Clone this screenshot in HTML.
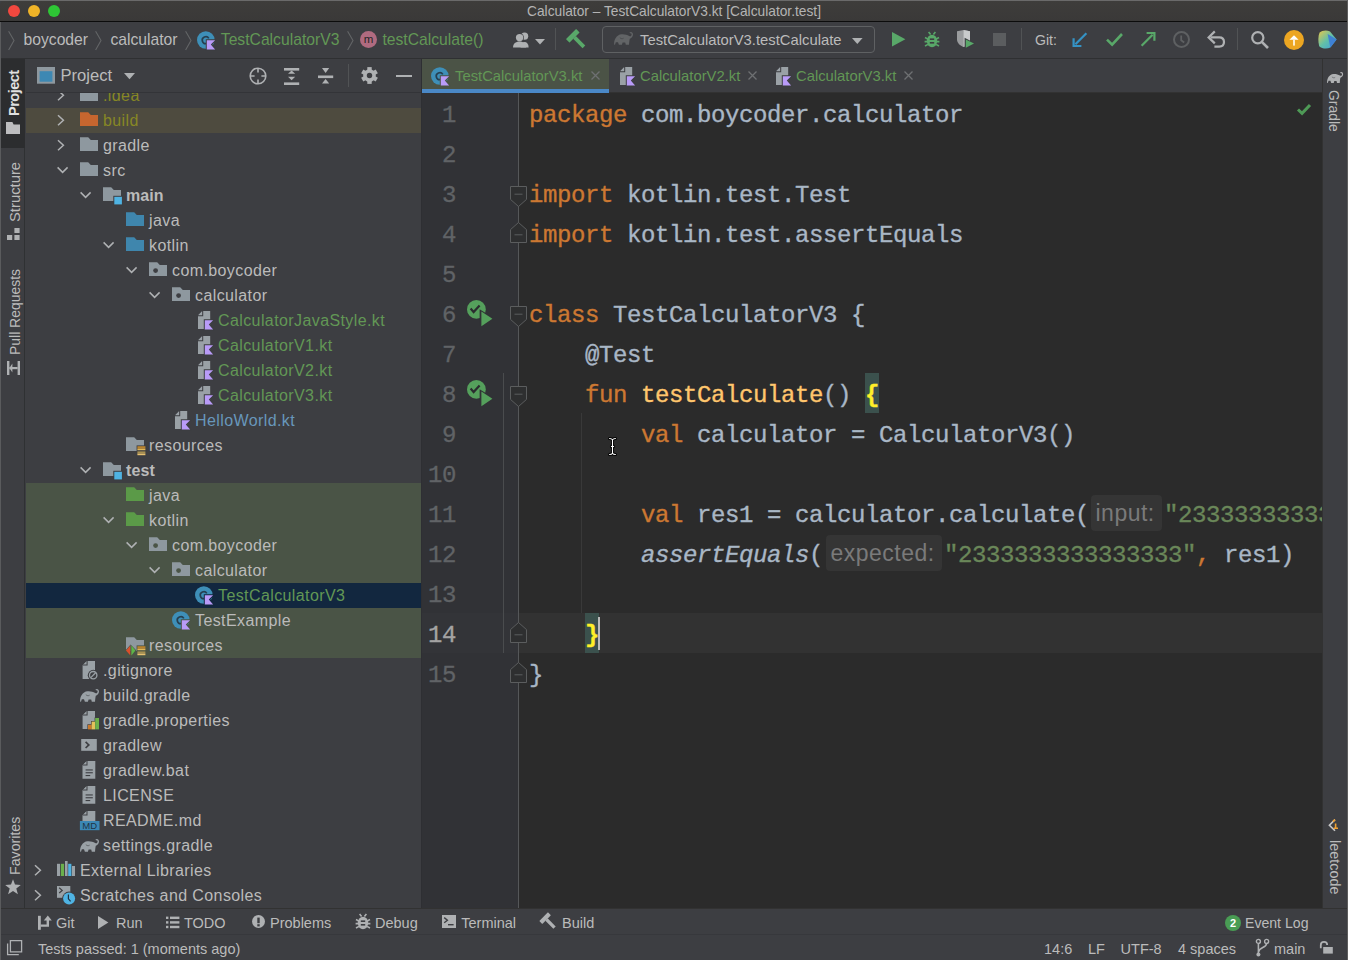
<!DOCTYPE html>
<html><head><meta charset="utf-8"><style>
*{margin:0;padding:0;box-sizing:border-box}
html,body{width:1348px;height:960px;overflow:hidden;background:#3d3e42;font-family:"Liberation Sans",sans-serif;color:#bbbbbb}
.a{position:absolute}
svg.a{overflow:visible}
#title{left:0;top:0;width:1348px;height:21px;background:linear-gradient(#3e3d3b,#3a3938);border-radius:5px 5px 0 0}
#titleline{left:0;top:20.6px;width:1348px;height:1.4px;background:#0c0c0c}
#nav{left:0;top:22px;width:1348px;height:37px;background:#3d3e42;border-bottom:1px solid #333438}
#lstripe{left:0;top:58px;width:25px;height:850px;background:#3d3e42;border-right:1px solid #2f3133}
#proj{left:26px;top:58px;width:395px;height:850px;background:#3d3e42;overflow:hidden}
#projhdr{left:0;top:0;width:395px;height:35px;background:#3d3e42;border-bottom:1px solid #333438}
.row{position:absolute;left:0;width:395px;height:25px}
.rowt{position:absolute;height:25px;line-height:25px;font-size:16px;letter-spacing:.4px;white-space:nowrap;color:#bbbbbb}
#split{left:421px;top:58px;width:1px;height:850px;background:#2e2f33}
#tabs{left:422px;top:58px;width:900px;height:35px;background:#3d3e42;border-bottom:1px solid #323232}
#editor{left:422px;top:93px;width:900px;height:815px;background:#2b2b2b;overflow:hidden}
#gutter{left:0;top:0;width:97px;height:815px;background:#313236}
.ln{position:absolute;left:0;width:34px;text-align:right;height:40px;line-height:40px;font-family:"Liberation Mono",monospace;font-size:24px;letter-spacing:-.4px;color:#606366;-webkit-text-stroke:.3px currentColor}
.code{position:absolute;left:107px;height:40px;line-height:40px;font-family:"Liberation Mono",monospace;font-size:24px;letter-spacing:-.4px;color:#a9b7c6;white-space:pre;-webkit-text-stroke:.35px currentColor}
.k{color:#cc7832}.f{color:#ffc66d}.s{color:#6a8759}
#rstripe{left:1322px;top:58px;width:26px;height:850px;background:#3d3e42;border-left:1px solid #323232;border-right:1px solid #5a5a5a}
#bstripe{left:0;top:908px;width:1348px;height:26px;background:#3d3e42;border-top:1px solid #323232}
#status{left:0;top:934px;width:1348px;height:26px;background:#3d3e42;border-top:1px solid #37383c}
.vt{position:absolute;transform-origin:0 0;transform:rotate(-90deg);white-space:nowrap;font-size:14px;color:#bbbbbb}
.br{font-weight:bold;color:#ffef28}
.it{font-style:italic}
.hint{position:absolute;height:36px;line-height:37.5px;font-size:23px;letter-spacing:.5px;color:#7a7a7a;white-space:nowrap}

</style></head><body>
<div id="title" class="a"></div><div id="titleline" class="a"></div>
<div class="a" style="left:0;top:0;width:1348px;height:1px;background:#6a6a6a"></div>
<div class="a" style="left:1347px;top:0;width:1px;height:960px;background:#5e5e5e;z-index:5"></div>
<div class="a" style="left:8px;top:5px;width:12px;height:12px;border-radius:6px;background:#f2483f"></div>
<div class="a" style="left:28px;top:5px;width:12px;height:12px;border-radius:6px;background:#f0b428"></div>
<div class="a" style="left:48px;top:5px;width:12px;height:12px;border-radius:6px;background:#2ec635"></div>
<div class="a" style="left:527px;top:2.8px;font-size:13.75px;line-height:17px;color:#b4b4b4;white-space:nowrap">Calculator – TestCalculatorV3.kt [Calculator.test]</div>
<div id="nav" class="a"></div>
<svg class="a" style="left:8px;top:30.5px" width="7" height="20" viewBox="0 0 7 20" ><path d="M0.6 0.2L6 9.6 0.6 19" fill="none" stroke="#636567" stroke-width="1.1"/></svg>
<div style="position:absolute;top:30px;height:20px;line-height:20px;font-size:15.7px;white-space:nowrap;left:23.5px;color:#bbbbbb">boycoder</div>
<svg class="a" style="left:95px;top:30.5px" width="7" height="20" viewBox="0 0 7 20" ><path d="M0.6 0.2L6 9.6 0.6 19" fill="none" stroke="#636567" stroke-width="1.1"/></svg>
<div style="position:absolute;top:30px;height:20px;line-height:20px;font-size:15.7px;white-space:nowrap;left:110.4px;color:#bbbbbb">calculator</div>
<svg class="a" style="left:185px;top:30.5px" width="7" height="20" viewBox="0 0 7 20" ><path d="M0.6 0.2L6 9.6 0.6 19" fill="none" stroke="#636567" stroke-width="1.1"/></svg>
<svg class="a" style="left:196.7px;top:28.2px" width="22" height="25" viewBox="0 0 22 25" ><circle cx="8.8" cy="12" r="8.8" fill="#3e8fb8"/><path d="M11.8 10.4A3.5 3.5 0 1 0 9.4 15.6" fill="none" stroke="#263f50" stroke-width="1.7"/><path d="M8.8 11.3h11.2l-4.6 5.2 4.6 5.8H8.8z" fill="#3d3e42"/><path d="M9.8 12.2h8.3l-4.3 4.4 4.3 4.8h-8.3z" fill="#b99bf8"/></svg>
<div style="position:absolute;top:30px;height:20px;line-height:20px;font-size:15.7px;white-space:nowrap;left:220.8px;color:#629755">TestCalculatorV3</div>
<svg class="a" style="left:347px;top:30.5px" width="7" height="20" viewBox="0 0 7 20" ><path d="M0.6 0.2L6 9.6 0.6 19" fill="none" stroke="#636567" stroke-width="1.1"/></svg>
<svg class="a" style="left:359.5px;top:31.299999999999997px" width="17" height="17" viewBox="0 0 17 17" ><circle cx="8.5" cy="8.5" r="8.5" fill="#b06b80"/><text x="8.6" y="12.3" text-anchor="middle" font-family="Liberation Sans" font-size="11.5" fill="#262626">m</text></svg>
<div style="position:absolute;top:30px;height:20px;line-height:20px;font-size:15.7px;white-space:nowrap;left:382.4px;color:#629755">testCalculate()</div>
<svg class="a" style="left:512.5px;top:31.6px" width="19" height="16" viewBox="0 0 19 16" ><circle cx="11.6" cy="4.2" r="3.6" fill="#afb1b3"/><path d="M7.6 15.4c0-3.4 1.8-5.4 4-5.4s4 2 4 5.4z" fill="#afb1b3"/><circle cx="6.6" cy="5.6" r="4.4" fill="#3d3e42"/><circle cx="6.6" cy="5.6" r="3.7" fill="#afb1b3"/><path d="M0 15.4c0-3.8 2.6-6 6.6-6s6.6 2.2 6.6 6z" fill="#afb1b3"/></svg>
<svg class="a" style="left:535px;top:38.6px" width="10" height="5.6" viewBox="0 0 10 5.6" ><path d="M0 0H10L5.0 5.6z" fill="#afb1b3"/></svg>
<div class="a" style="left:555px;top:28px;width:1px;height:22px;background:#515355"></div>
<svg class="a" style="left:568px;top:30.5px" width="19" height="18" viewBox="0 0 19 18" ><g transform="scale(1.0) rotate(-45 9 9)"><rect x="1.8" y="0.6" width="14.4" height="5" rx=".5" fill="#59a869"/><rect x="7.1" y="5.4" width="3.8" height="13.4" fill="#59a869"/></g></svg>
<div class="a" style="left:602px;top:26px;width:273px;height:27px;border:1px solid #5f6163;border-radius:4px"></div>
<svg class="a" style="left:614px;top:26px" width="22" height="25" viewBox="0 0 22 25" ><g transform="scale(1.0)"><path d="M0.2 18.8C-0.4 14 2.4 8.6 7.6 8.2c3-.2 5.6.6 7.6 1.8 1.4.8 2.2 0 2.4-1.2.2-1-.6-1.8-1.4-1.4l-.8-.9c1.6-1.2 3.6-.3 3.6 1.9 0 2.4-1.8 3.6-3.2 4.3-.4 1.4-.6 3.6-.8 6.1h-3.2l-.6-2.4h-2.6l-.7 2.4h-3l-.9-2.6h-2.2l-.8 2.6z" fill="#626466"/><path d="M5.8 11.6c1.2 1.2 2.6 1.4 3.8 .6" fill="none" stroke="#3d3e42" stroke-width=".6"/></g></svg>
<div class="a" style="left:640px;top:30px;height:20px;line-height:20px;font-size:14.8px;color:#bbbbbb;white-space:nowrap">TestCalculatorV3.testCalculate</div>
<svg class="a" style="left:851.5px;top:38.2px" width="10.6" height="6" viewBox="0 0 10.6 6" ><path d="M0 0H10.6L5.3 6z" fill="#afb1b3"/></svg>
<svg class="a" style="left:892px;top:32px" width="13.4" height="14.4" viewBox="0 0 13.4 14.4" ><path d="M0 0L13.4 7.2 0 14.4z" fill="#59a869"/></svg>
<svg class="a" style="left:924px;top:31px" width="16" height="17" viewBox="0 0 16 17" ><ellipse cx="8" cy="10" rx="5.2" ry="6.2" fill="#59a869"/><path d="M1 6.5l3 1.6M15 6.5l-3 1.6M0.6 10.6h3M15.4 10.6h-3M1 15l3-1.6M15 15l-3-1.6M4.6 1l2 2.4M11.4 1l-2 2.4" stroke="#59a869" stroke-width="1.6"/><rect x="5.8" y="7.4" width="4.4" height="1.6" fill="#3d3e42"/><rect x="5.8" y="11" width="4.4" height="1.6" fill="#3d3e42"/></svg>
<svg class="a" style="left:956px;top:30px" width="20" height="20" viewBox="0 0 20 20" ><path d="M1 1.2L7.6 0 14 1.2V9.4C14 13 11 15.6 7.6 17 4.2 15.6 1 13 1 9.4z" fill="#9a9c9e"/><path d="M7.6 0V17C11 15.6 14 13 14 9.4V1.2z" fill="#c9cbcc"/><path d="M8.6 7.8L19.6 13.6 8.6 19.4z" fill="#3d3e42"/><path d="M9.8 9.4L18 13.6 9.8 17.8z" fill="#59a869"/></svg>
<div class="a" style="left:993px;top:33px;width:13px;height:13px;background:#5b5d5f"></div>
<div class="a" style="left:1021px;top:28px;width:1px;height:22px;background:#515355"></div>
<div class="a" style="left:1035px;top:30px;height:20px;line-height:20px;font-size:14.1px;color:#bbbbbb">Git:</div>
<svg class="a" style="left:1073px;top:32.2px" width="15" height="15" viewBox="0 0 15 15" ><path d="M13.4 1.2L2.4 12.2" stroke="#3592c4" stroke-width="2.2"/><path d="M0.6 6.2V14H8.4" fill="none" stroke="#3592c4" stroke-width="2.2"/></svg>
<svg class="a" style="left:1106px;top:33.4px" width="17" height="13.2" viewBox="0 0 17 13.2" ><path d="M1 6.6L6.12 11.6L16 1" fill="none" stroke="#59a869" stroke-width="2.6"/></svg>
<svg class="a" style="left:1140px;top:32.2px" width="15" height="15" viewBox="0 0 15 15" ><path d="M1.6 13.8L12.6 2.8" stroke="#59a869" stroke-width="2.2"/><path d="M6.6 1H14.4V8.8" fill="none" stroke="#59a869" stroke-width="2.2"/></svg>
<svg class="a" style="left:1173px;top:31.2px" width="17" height="17" viewBox="0 0 17 17" ><circle cx="8.5" cy="8.5" r="7.5" fill="none" stroke="#5e6062" stroke-width="2"/><path d="M8.2 4.4V9.2L11.2 11.4" fill="none" stroke="#5e6062" stroke-width="1.8"/></svg>
<svg class="a" style="left:1208px;top:31.4px" width="17" height="17" viewBox="0 0 17 17" ><path d="M2.6 6.4H11.2C14.4 6.4 16 8.4 16 11S14.4 15.6 11.2 15.6H6.4" fill="none" stroke="#afb1b3" stroke-width="2.2"/><path d="M6.8 0.4L0.6 6.4 6.8 12.4" fill="none" stroke="#afb1b3" stroke-width="2.2"/></svg>
<div class="a" style="left:1237px;top:28px;width:1px;height:22px;background:#515355"></div>
<svg class="a" style="left:1251px;top:31.4px" width="18" height="18" viewBox="0 0 18 18" ><circle cx="6.8" cy="6.8" r="5.6" fill="none" stroke="#afb1b3" stroke-width="2.2"/><path d="M10.8 10.8L17 17" stroke="#afb1b3" stroke-width="2.6"/></svg>
<svg class="a" style="left:1284px;top:30px" width="20" height="20" viewBox="0 0 20 20" ><circle cx="10" cy="10" r="10" fill="#eca622"/><path d="M10 5.2L14.6 9.8H5.4z" fill="#ffffff"/><rect x="9.1" y="9.6" width="1.8" height="6" fill="#fff6e0"/></svg>
<svg class="a" style="left:1318px;top:30.4px" width="20" height="20" viewBox="0 0 20 20" ><defs><linearGradient id="pg" x1="0" y1="0" x2="1" y2="1"><stop offset="0" stop-color="#e8c84a"/><stop offset=".5" stop-color="#62c0a8"/><stop offset="1" stop-color="#3f9fe0"/></linearGradient></defs><path d="M1.6 2.6C4 .4 8.6 0 12 1.4L18.6 9.4 12.4 17.6C8.6 19.4 3.6 18.6 1.2 16.2 0 11.6 0 6.4 1.6 2.6z" fill="url(#pg)"/><path d="M9.6 4L18.6 9.4 12.4 17.6C11.6 14 10.4 8 9.6 4z" fill="#3b78d8" opacity=".85"/></svg>
<div id="lstripe" class="a"></div>
<div class="a" style="left:0;top:58px;width:25px;height:89.7px;background:#2c2d2f"></div>
<div class="a" style="left:0;top:22px;width:1px;height:938px;background:#5a5b5d;z-index:5"></div>
<div class="vt" style="left:6.6px;top:115.5px;font-size:14.5px;line-height:14px;font-weight:bold;letter-spacing:-.5px;color:#e0e0e0">Project</div>
<svg class="a" style="left:6px;top:122px" width="14" height="12" viewBox="0 0 14 12" ><path d="M0 0H6.4L7.6 2.5H14V12H0z" fill="#bdbdbf"/></svg>
<div class="vt" style="left:7.6px;top:221.5px;font-size:14.8px;line-height:14px;color:#bbbbbb">Structure</div>
<svg class="a" style="left:7px;top:228px" width="13" height="12" viewBox="0 0 13 12" ><rect x="0" y="7" width="5.2" height="5" fill="#afb1b3"/><rect x="7.4" y="7" width="5.2" height="5" fill="#afb1b3"/><rect x="7.4" y="0" width="5.2" height="5" fill="#afb1b3"/></svg>
<div class="vt" style="left:7.6px;top:355px;font-size:13.95px;line-height:14px;color:#bbbbbb">Pull Requests</div>
<svg class="a" style="left:7px;top:361px" width="13" height="14" viewBox="0 0 13 14" ><rect x="0" y="0" width="2.4" height="14" fill="#afb1b3"/><rect x="10.6" y="0" width="2.4" height="14" fill="#afb1b3"/><rect x="2.4" y="6" width="8.2" height="2.2" fill="#afb1b3"/><path d="M5.4 2.6L2.4 7.1 5.4 11.6z" fill="#afb1b3"/></svg>
<div class="vt" style="left:7.6px;top:875px;font-size:14.2px;line-height:14px;color:#bbbbbb">Favorites</div>
<svg class="a" style="left:5px;top:879px" width="16" height="16" viewBox="0 0 16 16" ><path d="M8 0.2L10 5.6 15.8 5.9 11.3 9.5 12.9 15.3 8 12 3.1 15.3 4.7 9.5 0.2 5.9 6 5.6z" fill="#afb1b3"/></svg>
<div id="proj" class="a">
<div class="row" style="top:25px;"></div>
<div class="row" style="top:50px;background:#4e4b3f;"></div>
<div class="row" style="top:75px;"></div>
<div class="row" style="top:100px;"></div>
<div class="row" style="top:125px;"></div>
<div class="row" style="top:150px;"></div>
<div class="row" style="top:175px;"></div>
<div class="row" style="top:200px;"></div>
<div class="row" style="top:225px;"></div>
<div class="row" style="top:250px;"></div>
<div class="row" style="top:275px;"></div>
<div class="row" style="top:300px;"></div>
<div class="row" style="top:325px;"></div>
<div class="row" style="top:350px;"></div>
<div class="row" style="top:375px;"></div>
<div class="row" style="top:400px;"></div>
<div class="row" style="top:425px;background:#4a5446;"></div>
<div class="row" style="top:450px;background:#4a5446;"></div>
<div class="row" style="top:475px;background:#4a5446;"></div>
<div class="row" style="top:500px;background:#4a5446;"></div>
<div class="row" style="top:525px;background:#12273f;"></div>
<div class="row" style="top:550px;background:#4a5446;"></div>
<div class="row" style="top:575px;background:#4a5446;"></div>
<div class="row" style="top:600px;"></div>
<div class="row" style="top:625px;"></div>
<div class="row" style="top:650px;"></div>
<div class="row" style="top:675px;"></div>
<div class="row" style="top:700px;"></div>
<div class="row" style="top:725px;"></div>
<div class="row" style="top:750px;"></div>
<div class="row" style="top:775px;"></div>
<div class="row" style="top:800px;"></div>
<div class="row" style="top:825px;"></div>
<svg class="a" style="left:31px;top:25px" width="10" height="25" viewBox="0 0 10 25" ><path d="M1 7.2l5.4 5-5.4 5" fill="none" stroke="#afb1b3" stroke-width="1.5"/></svg>
<svg class="a" style="left:54px;top:25px" width="20" height="25" viewBox="0 0 20 25" ><path d="M0 4.3h8.2l2.6 2.7H18V18H0z" fill="#8e989f"/></svg>
<div class="rowt" style="top:25px;left:77px;color:#878725;">.idea</div>
<svg class="a" style="left:31px;top:50px" width="10" height="25" viewBox="0 0 10 25" ><path d="M1 7.2l5.4 5-5.4 5" fill="none" stroke="#afb1b3" stroke-width="1.5"/></svg>
<svg class="a" style="left:54px;top:50px" width="20" height="25" viewBox="0 0 20 25" ><path d="M0 4.3h8.2l2.6 2.7H18V18H0z" fill="#c6662f"/></svg>
<div class="rowt" style="top:50px;left:77px;color:#878725;">build</div>
<svg class="a" style="left:31px;top:75px" width="10" height="25" viewBox="0 0 10 25" ><path d="M1 7.2l5.4 5-5.4 5" fill="none" stroke="#afb1b3" stroke-width="1.5"/></svg>
<svg class="a" style="left:54px;top:75px" width="20" height="25" viewBox="0 0 20 25" ><path d="M0 4.3h8.2l2.6 2.7H18V18H0z" fill="#8e989f"/></svg>
<div class="rowt" style="top:75px;left:77px;">gradle</div>
<svg class="a" style="left:30.6px;top:100px" width="14" height="25" viewBox="0 0 14 25" ><path d="M0.6 9.4l5 5 5-5" fill="none" stroke="#afb1b3" stroke-width="1.5"/></svg>
<svg class="a" style="left:54px;top:100px" width="20" height="25" viewBox="0 0 20 25" ><path d="M0 4.3h8.2l2.6 2.7H18V18H0z" fill="#8e989f"/></svg>
<div class="rowt" style="top:100px;left:77px;">src</div>
<svg class="a" style="left:53.6px;top:125px" width="14" height="25" viewBox="0 0 14 25" ><path d="M0.6 9.4l5 5 5-5" fill="none" stroke="#afb1b3" stroke-width="1.5"/></svg>
<svg class="a" style="left:77px;top:125px" width="22" height="25" viewBox="0 0 22 25" ><path d="M0 4.3h8.2l2.6 2.7H18V18H0z" fill="#8e989f"/><rect x="10.3" y="12.8" width="9.6" height="9.6" fill="#3d3e42"/><rect x="11.3" y="13.8" width="7.6" height="7.6" fill="#4fb3e3"/></svg>
<div class="rowt" style="top:125px;left:100px;font-weight:bold;letter-spacing:.1px;">main</div>
<svg class="a" style="left:100px;top:150px" width="20" height="25" viewBox="0 0 20 25" ><path d="M0 4.3h8.2l2.6 2.7H18V18H0z" fill="#3f86ad"/></svg>
<div class="rowt" style="top:150px;left:123px;">java</div>
<svg class="a" style="left:76.6px;top:175px" width="14" height="25" viewBox="0 0 14 25" ><path d="M0.6 9.4l5 5 5-5" fill="none" stroke="#afb1b3" stroke-width="1.5"/></svg>
<svg class="a" style="left:100px;top:175px" width="20" height="25" viewBox="0 0 20 25" ><path d="M0 4.3h8.2l2.6 2.7H18V18H0z" fill="#3f86ad"/></svg>
<div class="rowt" style="top:175px;left:123px;">kotlin</div>
<svg class="a" style="left:99.6px;top:200px" width="14" height="25" viewBox="0 0 14 25" ><path d="M0.6 9.4l5 5 5-5" fill="none" stroke="#afb1b3" stroke-width="1.5"/></svg>
<svg class="a" style="left:123px;top:200px" width="20" height="25" viewBox="0 0 20 25" ><path d="M0 4.3h8.2l2.6 2.7H18V18H0z" fill="#8e989f"/><circle cx="6.6" cy="12.6" r="2.4" fill="#3d3e42"/></svg>
<div class="rowt" style="top:200px;left:146px;">com.boycoder</div>
<svg class="a" style="left:122.6px;top:225px" width="14" height="25" viewBox="0 0 14 25" ><path d="M0.6 9.4l5 5 5-5" fill="none" stroke="#afb1b3" stroke-width="1.5"/></svg>
<svg class="a" style="left:146px;top:225px" width="20" height="25" viewBox="0 0 20 25" ><path d="M0 4.3h8.2l2.6 2.7H18V18H0z" fill="#8e989f"/><circle cx="6.6" cy="12.6" r="2.4" fill="#3d3e42"/></svg>
<div class="rowt" style="top:225px;left:169px;">calculator</div>
<svg class="a" style="left:169px;top:250px" width="22" height="25" viewBox="0 0 22 25" ><path d="M8 3h7.2v18H3V8z" fill="#9aa1a6"/><path d="M3 7.2L7.2 3V7.2z" fill="#9aa1a6"/><path d="M7.2 2.5h1v5.7h-5.2v-1h4.2z" fill="#3d3e42"/><path d="M8.8 11.3h11.2l-4.6 5.2 4.6 5.8H8.8z" fill="#3d3e42"/><path d="M9.8 12.2h8.3l-4.3 4.4 4.3 4.8h-8.3z" fill="#b99bf8"/></svg>
<div class="rowt" style="top:250px;left:192px;color:#629755;">CalculatorJavaStyle.kt</div>
<svg class="a" style="left:169px;top:275px" width="22" height="25" viewBox="0 0 22 25" ><path d="M8 3h7.2v18H3V8z" fill="#9aa1a6"/><path d="M3 7.2L7.2 3V7.2z" fill="#9aa1a6"/><path d="M7.2 2.5h1v5.7h-5.2v-1h4.2z" fill="#3d3e42"/><path d="M8.8 11.3h11.2l-4.6 5.2 4.6 5.8H8.8z" fill="#3d3e42"/><path d="M9.8 12.2h8.3l-4.3 4.4 4.3 4.8h-8.3z" fill="#b99bf8"/></svg>
<div class="rowt" style="top:275px;left:192px;color:#629755;">CalculatorV1.kt</div>
<svg class="a" style="left:169px;top:300px" width="22" height="25" viewBox="0 0 22 25" ><path d="M8 3h7.2v18H3V8z" fill="#9aa1a6"/><path d="M3 7.2L7.2 3V7.2z" fill="#9aa1a6"/><path d="M7.2 2.5h1v5.7h-5.2v-1h4.2z" fill="#3d3e42"/><path d="M8.8 11.3h11.2l-4.6 5.2 4.6 5.8H8.8z" fill="#3d3e42"/><path d="M9.8 12.2h8.3l-4.3 4.4 4.3 4.8h-8.3z" fill="#b99bf8"/></svg>
<div class="rowt" style="top:300px;left:192px;color:#629755;">CalculatorV2.kt</div>
<svg class="a" style="left:169px;top:325px" width="22" height="25" viewBox="0 0 22 25" ><path d="M8 3h7.2v18H3V8z" fill="#9aa1a6"/><path d="M3 7.2L7.2 3V7.2z" fill="#9aa1a6"/><path d="M7.2 2.5h1v5.7h-5.2v-1h4.2z" fill="#3d3e42"/><path d="M8.8 11.3h11.2l-4.6 5.2 4.6 5.8H8.8z" fill="#3d3e42"/><path d="M9.8 12.2h8.3l-4.3 4.4 4.3 4.8h-8.3z" fill="#b99bf8"/></svg>
<div class="rowt" style="top:325px;left:192px;color:#629755;">CalculatorV3.kt</div>
<svg class="a" style="left:146px;top:350px" width="22" height="25" viewBox="0 0 22 25" ><path d="M8 3h7.2v18H3V8z" fill="#9aa1a6"/><path d="M3 7.2L7.2 3V7.2z" fill="#9aa1a6"/><path d="M7.2 2.5h1v5.7h-5.2v-1h4.2z" fill="#3d3e42"/><path d="M8.8 11.3h11.2l-4.6 5.2 4.6 5.8H8.8z" fill="#3d3e42"/><path d="M9.8 12.2h8.3l-4.3 4.4 4.3 4.8h-8.3z" fill="#b99bf8"/></svg>
<div class="rowt" style="top:350px;left:169px;color:#6897bb;">HelloWorld.kt</div>
<svg class="a" style="left:100px;top:375px" width="22" height="25" viewBox="0 0 22 25" ><path d="M0 4.2h8.2l2.6 2.8H18V18H0z" fill="#8e989f"/><rect x="10.6" y="12.4" width="9.6" height="11" fill="#3d3e42"/><rect x="11.4" y="13.2" width="8" height="2.6" fill="#b8832e"/><rect x="11.4" y="15.8" width="8" height="1.4" fill="#e0b85a"/><rect x="11.4" y="18.4" width="8" height="2.2" fill="#a89050"/><rect x="11.4" y="20.6" width="8" height="1.6" fill="#e6c070"/></svg>
<div class="rowt" style="top:375px;left:123px;">resources</div>
<svg class="a" style="left:53.6px;top:400px" width="14" height="25" viewBox="0 0 14 25" ><path d="M0.6 9.4l5 5 5-5" fill="none" stroke="#afb1b3" stroke-width="1.5"/></svg>
<svg class="a" style="left:77px;top:400px" width="22" height="25" viewBox="0 0 22 25" ><path d="M0 4.3h8.2l2.6 2.7H18V18H0z" fill="#8e989f"/><rect x="10.3" y="12.8" width="9.6" height="9.6" fill="#3d3e42"/><rect x="11.3" y="13.8" width="7.6" height="7.6" fill="#4fb3e3"/></svg>
<div class="rowt" style="top:400px;left:100px;font-weight:bold;letter-spacing:.1px;">test</div>
<svg class="a" style="left:100px;top:425px" width="20" height="25" viewBox="0 0 20 25" ><path d="M0 4.3h8.2l2.6 2.7H18V18H0z" fill="#5b9a48"/></svg>
<div class="rowt" style="top:425px;left:123px;">java</div>
<svg class="a" style="left:76.6px;top:450px" width="14" height="25" viewBox="0 0 14 25" ><path d="M0.6 9.4l5 5 5-5" fill="none" stroke="#afb1b3" stroke-width="1.5"/></svg>
<svg class="a" style="left:100px;top:450px" width="20" height="25" viewBox="0 0 20 25" ><path d="M0 4.3h8.2l2.6 2.7H18V18H0z" fill="#5b9a48"/></svg>
<div class="rowt" style="top:450px;left:123px;">kotlin</div>
<svg class="a" style="left:99.6px;top:475px" width="14" height="25" viewBox="0 0 14 25" ><path d="M0.6 9.4l5 5 5-5" fill="none" stroke="#afb1b3" stroke-width="1.5"/></svg>
<svg class="a" style="left:123px;top:475px" width="20" height="25" viewBox="0 0 20 25" ><path d="M0 4.3h8.2l2.6 2.7H18V18H0z" fill="#8e989f"/><circle cx="6.6" cy="12.6" r="2.4" fill="#4a5446"/></svg>
<div class="rowt" style="top:475px;left:146px;">com.boycoder</div>
<svg class="a" style="left:122.6px;top:500px" width="14" height="25" viewBox="0 0 14 25" ><path d="M0.6 9.4l5 5 5-5" fill="none" stroke="#afb1b3" stroke-width="1.5"/></svg>
<svg class="a" style="left:146px;top:500px" width="20" height="25" viewBox="0 0 20 25" ><path d="M0 4.3h8.2l2.6 2.7H18V18H0z" fill="#8e989f"/><circle cx="6.6" cy="12.6" r="2.4" fill="#4a5446"/></svg>
<div class="rowt" style="top:500px;left:169px;">calculator</div>
<svg class="a" style="left:169px;top:525px" width="22" height="25" viewBox="0 0 22 25" ><circle cx="8.8" cy="12" r="8.8" fill="#3e8fb8"/><path d="M11.8 10.4A3.5 3.5 0 1 0 9.4 15.6" fill="none" stroke="#263f50" stroke-width="1.7"/><path d="M8.8 11.3h11.2l-4.6 5.2 4.6 5.8H8.8z" fill="#12273f"/><path d="M9.8 12.2h8.3l-4.3 4.4 4.3 4.8h-8.3z" fill="#b99bf8"/></svg>
<div class="rowt" style="top:525px;left:192px;color:#629755;">TestCalculatorV3</div>
<svg class="a" style="left:146px;top:550px" width="22" height="25" viewBox="0 0 22 25" ><circle cx="8.8" cy="12" r="8.8" fill="#3e8fb8"/><path d="M11.8 10.4A3.5 3.5 0 1 0 9.4 15.6" fill="none" stroke="#263f50" stroke-width="1.7"/><path d="M8.8 11.3h11.2l-4.6 5.2 4.6 5.8H8.8z" fill="#4a5446"/><path d="M9.8 12.2h8.3l-4.3 4.4 4.3 4.8h-8.3z" fill="#b99bf8"/></svg>
<div class="rowt" style="top:550px;left:169px;">TestExample</div>
<svg class="a" style="left:100px;top:575px" width="22" height="25" viewBox="0 0 22 25" ><path d="M0 4.2h8.2l2.6 2.8H18V18H0z" fill="#8e989f"/><path d="M-0.6 17.6L4.6 11.6V23.2z" fill="#4a5446"/><path d="M0 17.5L4.4 12.4V22.5z" fill="#d94f2b"/><path d="M4.6 11.6L10.4 17.6 4.6 23.4z" fill="#4a5446"/><path d="M5.4 12.6L9.4 17.5 5.4 22.4z" fill="#5eb548"/><rect x="10.6" y="12.4" width="9.6" height="11" fill="#4a5446"/><rect x="11.4" y="13.2" width="8" height="2.6" fill="#b8832e"/><rect x="11.4" y="15.8" width="8" height="1.4" fill="#e0b85a"/><rect x="11.4" y="18.4" width="8" height="2.2" fill="#a89050"/><rect x="11.4" y="20.6" width="8" height="1.6" fill="#e6c070"/></svg>
<div class="rowt" style="top:575px;left:123px;">resources</div>
<svg class="a" style="left:54px;top:600px" width="22" height="25" viewBox="0 0 22 25" ><path d="M7.1 3H15V21H2.6V7.5z" fill="#9aa1a6"/><path d="M2.6 7.2L6.8 3V7.2z" fill="#9aa1a6"/><path d="M6.6 2.5h1v5.0h-5.0v-1h4.0z" fill="#3d3e42"/><circle cx="13.2" cy="17.2" r="5.4" fill="#3d3e42"/><circle cx="13.2" cy="17.2" r="3.7" fill="none" stroke="#9aa1a6" stroke-width="1.3"/><path d="M10.8 19.6l4.8-4.8" stroke="#9aa1a6" stroke-width="1.3"/></svg>
<div class="rowt" style="top:600px;left:77px;">.gitignore</div>
<svg class="a" style="left:54px;top:625px" width="22" height="25" viewBox="0 0 22 25" ><g transform="scale(1.0)"><path d="M0.2 18.8C-0.4 14 2.4 8.6 7.6 8.2c3-.2 5.6.6 7.6 1.8 1.4.8 2.2 0 2.4-1.2.2-1-.6-1.8-1.4-1.4l-.8-.9c1.6-1.2 3.6-.3 3.6 1.9 0 2.4-1.8 3.6-3.2 4.3-.4 1.4-.6 3.6-.8 6.1h-3.2l-.6-2.4h-2.6l-.7 2.4h-3l-.9-2.6h-2.2l-.8 2.6z" fill="#9aa1a6"/><path d="M5.8 11.6c1.2 1.2 2.6 1.4 3.8 .6" fill="none" stroke="#3d3e42" stroke-width=".6"/></g></svg>
<div class="rowt" style="top:625px;left:77px;">build.gradle</div>
<svg class="a" style="left:54px;top:650px" width="22" height="25" viewBox="0 0 22 25" ><path d="M7.1 3H15V21H2.6V7.5z" fill="#9aa1a6"/><path d="M2.6 7.2L6.8 3V7.2z" fill="#9aa1a6"/><path d="M6.6 2.5h1v5.0h-5.0v-1h4.0z" fill="#3d3e42"/><path d="M7.4 22V16.2H11V13H14.6V9.4H19.6V22z" fill="#3d3e42"/><rect x="8" y="16.8" width="3.6" height="4.6" fill="#c8782a"/><rect x="11.6" y="13.6" width="3.6" height="7.8" fill="#e2c25a"/><rect x="15.2" y="10" width="3.8" height="11.4" fill="#6cb04a"/></svg>
<div class="rowt" style="top:650px;left:77px;">gradle.properties</div>
<svg class="a" style="left:54px;top:675px" width="20" height="25" viewBox="0 0 20 25" ><rect x="1.2" y="6" width="15.6" height="11.8" fill="#9aa1a6"/><path d="M5.6 8.8l3.2 3.1-3.2 3.1" fill="none" stroke="#3d3e42" stroke-width="1.7"/></svg>
<div class="rowt" style="top:675px;left:77px;">gradlew</div>
<svg class="a" style="left:54px;top:700px" width="20" height="25" viewBox="0 0 20 25" ><path d="M7.0 3H15.3V20.8H2.5V7.5z" fill="#9aa1a6"/><path d="M2.5 7.2L6.7 3V7.2z" fill="#9aa1a6"/><path d="M6.5 2.5h1v5.0h-5.0v-1h4.0z" fill="#3d3e42"/><rect x="5.6" y="11.4" width="7.2" height="1.1" fill="#3d3e42"/><rect x="5.6" y="14.2" width="7.2" height="1.1" fill="#3d3e42"/><rect x="5.6" y="17" width="4.6" height="1.1" fill="#3d3e42"/></svg>
<div class="rowt" style="top:700px;left:77px;">gradlew.bat</div>
<svg class="a" style="left:54px;top:725px" width="20" height="25" viewBox="0 0 20 25" ><path d="M7.0 3H15.3V20.8H2.5V7.5z" fill="#9aa1a6"/><path d="M2.5 7.2L6.7 3V7.2z" fill="#9aa1a6"/><path d="M6.5 2.5h1v5.0h-5.0v-1h4.0z" fill="#3d3e42"/><rect x="5.6" y="11.4" width="7.2" height="1.1" fill="#3d3e42"/><rect x="5.6" y="14.2" width="7.2" height="1.1" fill="#3d3e42"/><rect x="5.6" y="17" width="4.6" height="1.1" fill="#3d3e42"/></svg>
<div class="rowt" style="top:725px;left:77px;">LICENSE</div>
<svg class="a" style="left:54px;top:750px" width="22" height="25" viewBox="0 0 22 25" ><path d="M7.0 3H15.3V14H2.5V7.5z" fill="#9aa1a6"/><path d="M2.5 7.2L6.7 3V7.2z" fill="#9aa1a6"/><path d="M6.5 2.5h1v5.0h-5.0v-1h4.0z" fill="#3d3e42"/><rect x="-0.1" y="13" width="19.6" height="9.2" fill="#3b87b5"/><text x="9.7" y="21" text-anchor="middle" font-family="Liberation Sans" font-size="9.5" fill="#1f3445">MD</text></svg>
<div class="rowt" style="top:750px;left:77px;">README.md</div>
<svg class="a" style="left:54px;top:775px" width="22" height="25" viewBox="0 0 22 25" ><g transform="scale(1.0)"><path d="M0.2 18.8C-0.4 14 2.4 8.6 7.6 8.2c3-.2 5.6.6 7.6 1.8 1.4.8 2.2 0 2.4-1.2.2-1-.6-1.8-1.4-1.4l-.8-.9c1.6-1.2 3.6-.3 3.6 1.9 0 2.4-1.8 3.6-3.2 4.3-.4 1.4-.6 3.6-.8 6.1h-3.2l-.6-2.4h-2.6l-.7 2.4h-3l-.9-2.6h-2.2l-.8 2.6z" fill="#9aa1a6"/><path d="M5.8 11.6c1.2 1.2 2.6 1.4 3.8 .6" fill="none" stroke="#3d3e42" stroke-width=".6"/></g></svg>
<div class="rowt" style="top:775px;left:77px;">settings.gradle</div>
<svg class="a" style="left:8px;top:800px" width="10" height="25" viewBox="0 0 10 25" ><path d="M1 7.2l5.4 5-5.4 5" fill="none" stroke="#afb1b3" stroke-width="1.5"/></svg>
<svg class="a" style="left:31px;top:800px" width="20" height="25" viewBox="0 0 20 25" ><rect x="0" y="5.8" width="3" height="12.2" fill="#9aa1a6"/><rect x="3.8" y="5.8" width="3.3" height="12.2" fill="#6ab04c"/><rect x="8" y="3" width="2.6" height="15" fill="#9aa1a6"/><rect x="11.2" y="5.8" width="3.2" height="12.2" fill="#4fb3e3"/><rect x="15" y="8" width="3" height="10" fill="#9aa1a6"/></svg>
<div class="rowt" style="top:800px;left:54px;">External Libraries</div>
<svg class="a" style="left:8px;top:825px" width="10" height="25" viewBox="0 0 10 25" ><path d="M1 7.2l5.4 5-5.4 5" fill="none" stroke="#afb1b3" stroke-width="1.5"/></svg>
<svg class="a" style="left:31px;top:825px" width="22" height="25" viewBox="0 0 22 25" ><rect x="0" y="3" width="13.3" height="11.8" fill="#9aa1a6"/><path d="M2.2 4.8l3 2.6-3 2.6" fill="none" stroke="#3d3e42" stroke-width="1.2"/><circle cx="12.1" cy="15.6" r="7" fill="#3d3e42"/><circle cx="12.1" cy="15.6" r="6" fill="#4fb3e3"/><path d="M11.4 11.4v4.4l2.2 2.6" fill="none" stroke="#1f3445" stroke-width="1.2"/></svg>
<div class="rowt" style="top:825px;left:54px;">Scratches and Consoles</div>
<div id="projhdr" class="a">
<svg class="a" style="left:10.899999999999999px;top:9.299999999999997px" width="18" height="17" viewBox="0 0 18 17" ><rect x="0" y="0" width="18" height="16.7" fill="#8e989f"/><rect x="2.6" y="4.2" width="12.8" height="10.5" fill="#3d88b3"/></svg>
<div class="a" style="left:34.5px;top:0.8px;height:34px;line-height:34px;font-size:16.6px;color:#bbbbbb">Project</div>
<svg class="a" style="left:98.4px;top:15.099999999999994px" width="11" height="6.3" viewBox="0 0 11 6.3" ><path d="M0 0H11L5.5 6.3z" fill="#afb1b3"/></svg>
<svg class="a" style="left:223px;top:9px" width="18" height="18" viewBox="0 0 18 18" ><circle cx="9" cy="9" r="7.8" fill="none" stroke="#afb1b3" stroke-width="1.6"/><path d="M9 1.2V5.6M9 12.4V16.8M1.2 9H5.6M12.4 9H16.8" stroke="#afb1b3" stroke-width="1.6"/></svg>
<svg class="a" style="left:258.3px;top:10.299999999999997px" width="16" height="18" viewBox="0 0 16 18" ><rect x="0" y="0" width="15.2" height="2.6" fill="#afb1b3"/><rect x="0" y="14.4" width="15.2" height="2.6" fill="#afb1b3"/><path d="M7.6 2.6L11.2 5.8H4z M4 8.8H11.2L7.6 12.2z" fill="#afb1b3"/></svg>
<svg class="a" style="left:292.3px;top:10px" width="16" height="16" viewBox="0 0 16 16" ><rect x="0" y="7.5" width="15.2" height="2.6" fill="#afb1b3"/><path d="M4 0H11.2L7.6 4.9z M7.6 11L11.2 15.6H4z" fill="#afb1b3"/></svg>
<div class="a" style="left:321.5px;top:6px;width:1px;height:22.6px;background:#515355"></div>
<svg class="a" style="left:335.4px;top:9.299999999999997px" width="17" height="17" viewBox="0 0 17 17" ><g transform="translate(8.5 8.5)"><rect x="-2.2" y="-8.4" width="4.4" height="4" fill="#afb1b3" transform="rotate(0)"/><rect x="-2.2" y="-8.4" width="4.4" height="4" fill="#afb1b3" transform="rotate(60)"/><rect x="-2.2" y="-8.4" width="4.4" height="4" fill="#afb1b3" transform="rotate(120)"/><rect x="-2.2" y="-8.4" width="4.4" height="4" fill="#afb1b3" transform="rotate(180)"/><rect x="-2.2" y="-8.4" width="4.4" height="4" fill="#afb1b3" transform="rotate(240)"/><rect x="-2.2" y="-8.4" width="4.4" height="4" fill="#afb1b3" transform="rotate(300)"/><circle r="6.3" fill="#afb1b3"/><circle r="2.7" fill="#3d3e42"/></g></svg>
<div class="a" style="left:370.3px;top:16.5px;width:15.4px;height:2.7px;background:#afb1b3"></div>
</div>
</div>
<div id="split" class="a"></div>
<div id="tabs" class="a"></div>
<div class="a" style="left:422px;top:59px;width:187px;height:33px;background:#4b5346"></div>
<div class="a" style="left:422px;top:89px;width:187px;height:4px;background:#4a88c7"></div>
<svg class="a" style="left:431px;top:63.5px" width="22" height="25" viewBox="0 0 22 25" ><circle cx="8.8" cy="12" r="8.8" fill="#3e8fb8"/><path d="M11.8 10.4A3.5 3.5 0 1 0 9.4 15.6" fill="none" stroke="#263f50" stroke-width="1.7"/><path d="M8.8 11.3h11.2l-4.6 5.2 4.6 5.8H8.8z" fill="#4b5346"/><path d="M9.8 12.2h8.3l-4.3 4.4 4.3 4.8h-8.3z" fill="#b99bf8"/></svg>
<div style="position:absolute;top:64.3px;height:24px;line-height:24px;font-size:14.8px;color:#629755;white-space:nowrap;left:455px">TestCalculatorV3.kt</div>
<svg class="a" style="left:591px;top:71px" width="9" height="9" viewBox="0 0 9 9" ><path d="M0.5 0.5L8.5 8.5M8.5 0.5L0.5 8.5" stroke="#6e7072" stroke-width="1.3"/></svg>
<svg class="a" style="left:617px;top:63.5px" width="22" height="25" viewBox="0 0 22 25" ><path d="M8 3h7.2v18H3V8z" fill="#9aa1a6"/><path d="M3 7.2L7.2 3V7.2z" fill="#9aa1a6"/><path d="M7.2 2.5h1v5.7h-5.2v-1h4.2z" fill="#3d3e42"/><path d="M8.8 11.3h11.2l-4.6 5.2 4.6 5.8H8.8z" fill="#3d3e42"/><path d="M9.8 12.2h8.3l-4.3 4.4 4.3 4.8h-8.3z" fill="#b99bf8"/></svg>
<div style="position:absolute;top:64.3px;height:24px;line-height:24px;font-size:14.8px;color:#629755;white-space:nowrap;left:640px">CalculatorV2.kt</div>
<svg class="a" style="left:747.5px;top:71px" width="9" height="9" viewBox="0 0 9 9" ><path d="M0.5 0.5L8.5 8.5M8.5 0.5L0.5 8.5" stroke="#6e7072" stroke-width="1.3"/></svg>
<svg class="a" style="left:772.5px;top:63.5px" width="22" height="25" viewBox="0 0 22 25" ><path d="M8 3h7.2v18H3V8z" fill="#9aa1a6"/><path d="M3 7.2L7.2 3V7.2z" fill="#9aa1a6"/><path d="M7.2 2.5h1v5.7h-5.2v-1h4.2z" fill="#3d3e42"/><path d="M8.8 11.3h11.2l-4.6 5.2 4.6 5.8H8.8z" fill="#3d3e42"/><path d="M9.8 12.2h8.3l-4.3 4.4 4.3 4.8h-8.3z" fill="#b99bf8"/></svg>
<div style="position:absolute;top:64.3px;height:24px;line-height:24px;font-size:14.8px;color:#629755;white-space:nowrap;left:796px">CalculatorV3.kt</div>
<svg class="a" style="left:903.5px;top:71px" width="9" height="9" viewBox="0 0 9 9" ><path d="M0.5 0.5L8.5 8.5M8.5 0.5L0.5 8.5" stroke="#6e7072" stroke-width="1.3"/></svg>
<div id="editor" class="a"><div id="gutter" class="a"></div>
<div class="a" style="left:0;top:520px;width:900px;height:40px;background:#323232"></div>
<div class="a" style="left:0;top:520px;width:97px;height:40px;background:#333438"></div>
<div class="a" style="left:96px;top:0;width:1px;height:815px;background:#555759"></div>
<div class="a" style="left:81px;top:280px;width:1px;height:280px;background:#4a4c4e"></div>
<div class="a" style="left:159px;top:320px;width:1px;height:200px;background:#393939"></div>
<div class="a" style="left:443px;top:280px;width:14px;height:40px;background:#3b514d"></div>
<div class="a" style="left:163px;top:520px;width:14px;height:40px;background:#3b514d"></div>
<div class="a" style="left:669px;top:402px;width:71px;height:36px;border-radius:4px;background:#353535"></div>
<div class="a" style="left:404px;top:442px;width:116px;height:36px;border-radius:4px;background:#353535"></div>
<div class="ln" style="top:3.4px;color:#606366">1</div>
<div class="ln" style="top:43.4px;color:#606366">2</div>
<div class="ln" style="top:83.4px;color:#606366">3</div>
<div class="ln" style="top:123.4px;color:#606366">4</div>
<div class="ln" style="top:163.4px;color:#606366">5</div>
<div class="ln" style="top:203.4px;color:#606366">6</div>
<div class="ln" style="top:243.4px;color:#606366">7</div>
<div class="ln" style="top:283.4px;color:#606366">8</div>
<div class="ln" style="top:323.4px;color:#606366">9</div>
<div class="ln" style="top:363.4px;color:#606366">10</div>
<div class="ln" style="top:403.4px;color:#606366">11</div>
<div class="ln" style="top:443.4px;color:#606366">12</div>
<div class="ln" style="top:483.4px;color:#606366">13</div>
<div class="ln" style="top:523.4px;color:#a4a3a3">14</div>
<div class="ln" style="top:563.4px;color:#606366">15</div>
<div class="code" style="top:3.4px"><span class="k">package</span> com.boycoder.calculator</div>
<div class="code" style="top:83.4px"><span class="k">import</span> kotlin.test.Test</div>
<div class="code" style="top:123.4px"><span class="k">import</span> kotlin.test.assertEquals</div>
<div class="code" style="top:203.4px"><span class="k">class</span> TestCalculatorV3 {</div>
<div class="code" style="top:243.4px">    @Test</div>
<div class="code" style="top:283.4px">    <span class="k">fun</span> <span class="f">testCalculate</span>() <b class="br">{</b></div>
<div class="code" style="top:323.4px">        <span class="k">val</span> calculator = CalculatorV3()</div>
<div class="code" style="top:403.4px">        <span class="k">val</span> res1 = calculator.calculate(</div>
<div class="code" style="top:443.4px">        <i class="it">assertEquals</i>(</div>
<div class="code" style="top:523.4px">    <b class="br">}</b></div>
<div class="code" style="top:563.4px">}</div>
<div class="code" style="left:742px;top:403.4px"><span class="s">"2333333333333333"</span></div>
<div class="code" style="left:522px;top:443.4px"><span class="s">"2333333333333333"</span><span class="k">,</span> res1)</div>
<div class="hint" style="left:673.5px;top:402px">input:</div>
<div class="hint" style="left:408.5px;top:442px">expected:</div>
<div class="a" style="left:176px;top:524px;width:2.4px;height:33px;background:#bbbbbb"></div>
<svg class="a" style="left:44.60000000000002px;top:206.60000000000002px" width="26" height="27" viewBox="0 0 26 27" ><circle cx="9.4" cy="9.4" r="9.4" fill="#55a05c"/><path d="M12.6 9.2L26 17.6 12.6 26z" fill="#313236"/><path d="M14.4 11.4L25.4 18.8 14.4 26.2z" fill="#55a05c"/><path d="M3.6 8.6L6.6 12 12.6 5.4" fill="none" stroke="#2b2d2f" stroke-width="2.2"/></svg>
<svg class="a" style="left:44.60000000000002px;top:286.6px" width="26" height="27" viewBox="0 0 26 27" ><circle cx="9.4" cy="9.4" r="9.4" fill="#55a05c"/><path d="M12.6 9.2L26 17.6 12.6 26z" fill="#313236"/><path d="M14.4 11.4L25.4 18.8 14.4 26.2z" fill="#55a05c"/><path d="M3.6 8.6L6.6 12 12.6 5.4" fill="none" stroke="#2b2d2f" stroke-width="2.2"/></svg>
<svg class="a" style="left:88px;top:93px" width="17" height="21" viewBox="0 0 17 21" ><path d="M0.5 0.5H16.5V13.4L8.5 20.5 0.5 13.4z" fill="#2e2f30" stroke="#5b5d5e" stroke-width="1"/><path d="M4.5 8.2H12.5" stroke="#5b5d5e" stroke-width="1"/></svg>
<svg class="a" style="left:88px;top:128.5px" width="17" height="21" viewBox="0 0 17 21" ><path d="M0.5 20.5H16.5V7.6L8.5 0.5 0.5 7.6z" fill="#2e2f30" stroke="#5b5d5e" stroke-width="1"/><path d="M4.5 12.8H12.5" stroke="#5b5d5e" stroke-width="1"/></svg>
<svg class="a" style="left:88px;top:213px" width="17" height="21" viewBox="0 0 17 21" ><path d="M0.5 0.5H16.5V13.4L8.5 20.5 0.5 13.4z" fill="#2e2f30" stroke="#5b5d5e" stroke-width="1"/><path d="M4.5 8.2H12.5" stroke="#5b5d5e" stroke-width="1"/></svg>
<svg class="a" style="left:88px;top:293px" width="17" height="21" viewBox="0 0 17 21" ><path d="M0.5 0.5H16.5V13.4L8.5 20.5 0.5 13.4z" fill="#2e2f30" stroke="#5b5d5e" stroke-width="1"/><path d="M4.5 8.2H12.5" stroke="#5b5d5e" stroke-width="1"/></svg>
<svg class="a" style="left:88px;top:529px" width="17" height="21" viewBox="0 0 17 21" ><path d="M0.5 20.5H16.5V7.6L8.5 0.5 0.5 7.6z" fill="#2e2f30" stroke="#5b5d5e" stroke-width="1"/><path d="M4.5 12.8H12.5" stroke="#5b5d5e" stroke-width="1"/></svg>
<svg class="a" style="left:88px;top:569px" width="17" height="21" viewBox="0 0 17 21" ><path d="M0.5 20.5H16.5V7.6L8.5 0.5 0.5 7.6z" fill="#2e2f30" stroke="#5b5d5e" stroke-width="1"/><path d="M4.5 12.8H12.5" stroke="#5b5d5e" stroke-width="1"/></svg>
<svg class="a" style="left:875px;top:10.700000000000003px" width="14" height="11" viewBox="0 0 14 11" ><path d="M1 5.5L5.04 9.4L13 1" fill="none" stroke="#4e9a56" stroke-width="3"/></svg>
</div>
<div id="rstripe" class="a"></div><div id="bstripe" class="a"></div><div id="status" class="a"></div>
<div class="a" style="left:1px;top:58px;width:1346px;height:1px;background:#2f3032;z-index:4"></div>
<svg class="a" style="left:1326.6px;top:66.5px" width="22" height="25" viewBox="0 0 22 25" ><g transform="scale(0.85)"><path d="M0.2 18.8C-0.4 14 2.4 8.6 7.6 8.2c3-.2 5.6.6 7.6 1.8 1.4.8 2.2 0 2.4-1.2.2-1-.6-1.8-1.4-1.4l-.8-.9c1.6-1.2 3.6-.3 3.6 1.9 0 2.4-1.8 3.6-3.2 4.3-.4 1.4-.6 3.6-.8 6.1h-3.2l-.6-2.4h-2.6l-.7 2.4h-3l-.9-2.6h-2.2l-.8 2.6z" fill="#afb1b3"/><path d="M5.8 11.6c1.2 1.2 2.6 1.4 3.8 .6" fill="none" stroke="#3d3e42" stroke-width=".6"/></g></svg>
<div class="vt" style="left:1341.1px;top:89.9px;transform:rotate(90deg);font-size:13.9px;line-height:14px;color:#bbbbbb">Gradle</div>
<svg class="a" style="left:1328px;top:819px" width="12" height="13" viewBox="0 0 12 13" ><path d="M7 0.6L1.4 6.2 7 11.8" fill="none" stroke="#c8c8c8" stroke-width="1.6"/><path d="M7.6 4.6V9M5.6 9.2H10" stroke="#f0a030" stroke-width="1.6"/><path d="M7 0.6L5 2.6" stroke="#f0a030" stroke-width="1.6"/></svg>
<div class="vt" style="left:1341.6px;top:840px;transform:rotate(90deg);font-size:14.4px;line-height:14px;color:#bbbbbb">leetcode</div>
<svg class="a" style="left:38px;top:914.5px" width="15" height="16" viewBox="0 0 15 16" ><rect x="0" y="0.8" width="2.8" height="14" fill="#afb1b3"/><path d="M2.6 10.6H9.8V5" fill="none" stroke="#afb1b3" stroke-width="2.4"/><path d="M5.8 5.6L9.8 0.6 13.8 5.6z" fill="#afb1b3"/></svg>
<div style="position:absolute;top:913.3px;height:20px;line-height:20px;font-size:14.5px;color:#bbbbbb;white-space:nowrap;left:56px">Git</div>
<svg class="a" style="left:98px;top:915.5px" width="10.4" height="13" viewBox="0 0 10.4 13" ><path d="M0 0L10.4 6.5 0 13z" fill="#afb1b3"/></svg>
<div style="position:absolute;top:913.3px;height:20px;line-height:20px;font-size:14.5px;color:#bbbbbb;white-space:nowrap;left:116px">Run</div>
<svg class="a" style="left:166px;top:915.5px" width="14" height="13" viewBox="0 0 14 13" ><rect x="0" y="0.6" width="2.4" height="2.4" fill="#afb1b3"/><rect x="4" y="0.6" width="9.4" height="2.4" fill="#afb1b3"/><rect x="0" y="5.2" width="2.4" height="2.4" fill="#afb1b3"/><rect x="4" y="5.2" width="9.4" height="2.4" fill="#afb1b3"/><rect x="0" y="9.8" width="2.4" height="2.4" fill="#afb1b3"/><rect x="4" y="9.8" width="9.4" height="2.4" fill="#afb1b3"/></svg>
<div style="position:absolute;top:913.3px;height:20px;line-height:20px;font-size:14.5px;color:#bbbbbb;white-space:nowrap;left:184px">TODO</div>
<svg class="a" style="left:251.5px;top:915.0px" width="13" height="13" viewBox="0 0 13 13" ><circle cx="6.5" cy="6.5" r="6.5" fill="#afb1b3"/><rect x="5.3" y="2.6" width="2.4" height="5.6" fill="#3d3e42"/><rect x="5.3" y="9.2" width="2.4" height="2.2" fill="#3d3e42"/></svg>
<div style="position:absolute;top:913.3px;height:20px;line-height:20px;font-size:14.5px;color:#bbbbbb;white-space:nowrap;left:270px">Problems</div>
<svg class="a" style="left:355px;top:913.4px" width="16" height="17" viewBox="0 0 16 17" ><ellipse cx="8" cy="10" rx="5.2" ry="6.2" fill="#afb1b3"/><path d="M1 6.5l3 1.6M15 6.5l-3 1.6M0.6 10.6h3M15.4 10.6h-3M1 15l3-1.6M15 15l-3-1.6M4.6 1l2 2.4M11.4 1l-2 2.4" stroke="#afb1b3" stroke-width="1.6"/><rect x="5.8" y="7.4" width="4.4" height="1.6" fill="#3d3e42"/><rect x="5.8" y="11" width="4.4" height="1.6" fill="#3d3e42"/></svg>
<div style="position:absolute;top:913.3px;height:20px;line-height:20px;font-size:14.5px;color:#bbbbbb;white-space:nowrap;left:375px">Debug</div>
<svg class="a" style="left:442px;top:915px" width="14" height="13" viewBox="0 0 14 13" ><rect x="0" y="0" width="14" height="13" fill="#afb1b3"/><path d="M2.2 2.6l3.2 2.6-3.2 2.6" fill="none" stroke="#3d3e42" stroke-width="1.4"/><rect x="6" y="9" width="5.6" height="1.4" fill="#3d3e42"/></svg>
<div style="position:absolute;top:913.3px;height:20px;line-height:20px;font-size:14.5px;color:#bbbbbb;white-space:nowrap;left:461.3px">Terminal</div>
<svg class="a" style="left:541px;top:913.6px" width="19" height="18" viewBox="0 0 19 18" ><g transform="scale(0.85) rotate(-45 9 9)"><rect x="1.8" y="0.6" width="14.4" height="5" rx=".5" fill="#afb1b3"/><rect x="7.1" y="5.4" width="3.8" height="13.4" fill="#afb1b3"/></g></svg>
<div style="position:absolute;top:913.3px;height:20px;line-height:20px;font-size:14.5px;color:#bbbbbb;white-space:nowrap;left:562px">Build</div>
<div class="a" style="left:1225px;top:914.5px;width:16px;height:16px;border-radius:8px;background:#499c54;color:#fff;font-size:11px;font-weight:bold;line-height:16px;text-align:center">2</div>
<div style="position:absolute;top:913.3px;height:20px;line-height:20px;font-size:14.5px;color:#bbbbbb;white-space:nowrap;left:1245px;font-size:14.1px">Event Log</div>
<svg class="a" style="left:7px;top:940px" width="15" height="15" viewBox="0 0 15 15" ><path d="M3.4 0.6H14.6V11.8H3.4z" fill="none" stroke="#afb1b3" stroke-width="1.3"/><path d="M0.6 3.4V14.6H11.8" fill="none" stroke="#afb1b3" stroke-width="1.3"/></svg>
<div style="position:absolute;top:938.5px;height:20px;line-height:20px;font-size:14.5px;color:#bbbbbb;white-space:nowrap;left:38px">Tests passed: 1 (moments ago)</div>
<div style="position:absolute;top:938.5px;height:20px;line-height:20px;font-size:14.5px;color:#bbbbbb;white-space:nowrap;left:1044px">14:6</div>
<div style="position:absolute;top:938.5px;height:20px;line-height:20px;font-size:14.5px;color:#bbbbbb;white-space:nowrap;left:1088px">LF</div>
<div style="position:absolute;top:938.5px;height:20px;line-height:20px;font-size:14.5px;color:#bbbbbb;white-space:nowrap;left:1120.6px">UTF-8</div>
<div style="position:absolute;top:938.5px;height:20px;line-height:20px;font-size:14.5px;color:#bbbbbb;white-space:nowrap;left:1178px">4 spaces</div>
<svg class="a" style="left:1255.6px;top:938.8px" width="13" height="18" viewBox="0 0 13 18" ><circle cx="2.4" cy="2.4" r="2" fill="none" stroke="#afb1b3" stroke-width="1.4"/><circle cx="2.4" cy="15.6" r="2" fill="#afb1b3"/><circle cx="10.6" cy="2.4" r="2" fill="none" stroke="#afb1b3" stroke-width="1.4"/><path d="M2.4 4.4V14M10.6 4.4C10.6 9 2.8 8 2.6 13" fill="none" stroke="#afb1b3" stroke-width="1.6"/></svg>
<div style="position:absolute;top:938.5px;height:20px;line-height:20px;font-size:14.5px;color:#bbbbbb;white-space:nowrap;left:1274px">main</div>
<svg class="a" style="left:1318.5px;top:941px" width="14" height="13" viewBox="0 0 14 13" ><path d="M1.8 7.2V4A3.2 3.2 0 0 1 8.2 4" fill="none" stroke="#afb1b3" stroke-width="1.8"/><rect x="4.2" y="6" width="9.6" height="6.6" fill="#afb1b3"/></svg>
<svg class="a" style="left:608px;top:437px" width="10" height="20" viewBox="0 0 10 20" ><path d="M1.6 1.5Q3.6 1.5 4.5 2.8Q5.4 1.5 7.4 1.5M4.5 2.8V16.2M1.6 17.5Q3.6 17.5 4.5 16.2Q5.4 17.5 7.4 17.5M3.4 9.5H5.6" fill="none" stroke="#000" stroke-width="3" stroke-linecap="round"/><path d="M1.6 1.5Q3.6 1.5 4.5 2.8Q5.4 1.5 7.4 1.5M4.5 2.8V16.2M1.6 17.5Q3.6 17.5 4.5 16.2Q5.4 17.5 7.4 17.5M3.4 9.5H5.6" fill="none" stroke="#fff" stroke-width="1.1" stroke-linecap="round"/></svg>
</body></html>
